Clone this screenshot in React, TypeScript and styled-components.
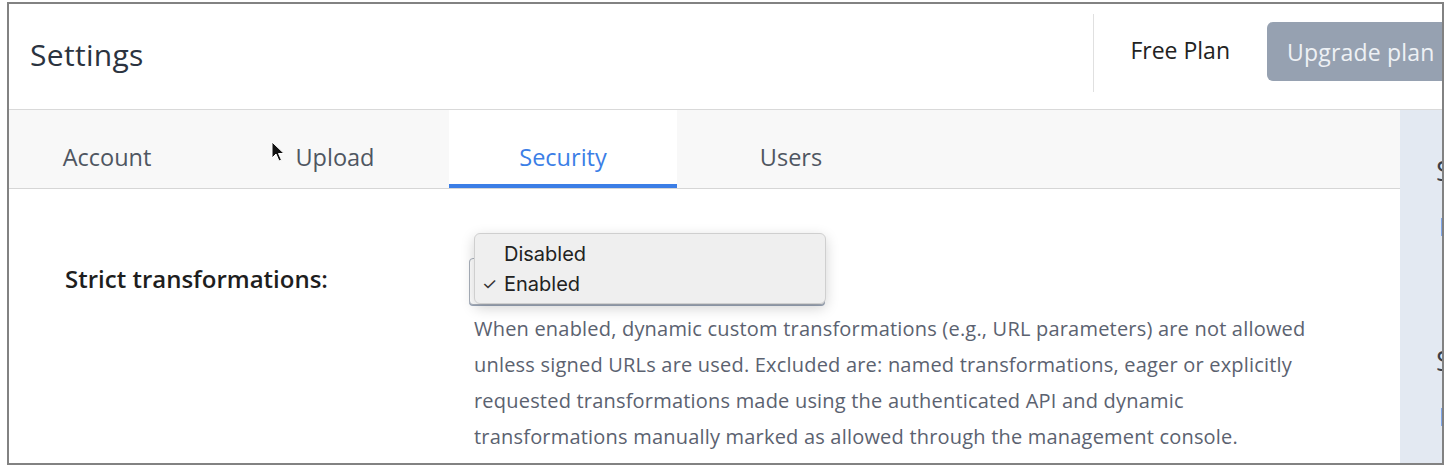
import styled, { createGlobalStyle } from "styled-components";

const tabs = ["Account", "Upload", "Security", "Users"];
const activeTab = "Security";

const options = [
  { id: "disabled", label: "Disabled", checked: false },
  { id: "enabled", label: "Enabled", checked: true },
];

const sideSections = ["Security", "Storage"];

export default function App() {
  return (
    <>
      <GlobalStyle />
      <Frame>
        <Header>
          <Title>Settings</Title>
          <HeaderRight>
            <Divider />
            <PlanName>Free Plan</PlanName>
            <UpgradeButton>Upgrade plan</UpgradeButton>
          </HeaderRight>
        </Header>
        <Body>
          <Main>
            <TabBar>
              {tabs.map((t) => (
                <Tab key={t} $active={t === activeTab}>
                  {t}
                </Tab>
              ))}
              <Cursor width="14" height="22" viewBox="0 0 14 22">
                <path
                  d="M1 1 L1 17 L5 13 L8 20 L10.5 19 L7.5 12.5 L13 12.5 Z"
                  fill="#111"
                  stroke="#fff"
                  strokeWidth="1"
                  strokeLinejoin="round"
                />
              </Cursor>
            </TabBar>
            <Content>
              <Label>Strict transformations:</Label>
              <Control>
                <SelectBox />
                <Popup>
                  {options.map((o) => (
                    <Option key={o.id}>
                      <Check>{o.checked ? "✓" : ""}</Check>
                      {o.label}
                    </Option>
                  ))}
                </Popup>
                <Description>
                  When enabled, dynamic custom transformations (e.g., URL
                  parameters) are not allowed unless signed URLs are used.
                  Excluded are: named transformations, eager or explicitly
                  requested transformations made using the authenticated API
                  and dynamic transformations manually marked as allowed
                  through the management console.
                </Description>
              </Control>
            </Content>
          </Main>
          <Sidebar>
            {sideSections.map((s) => (
              <SideSection key={s}>
                <SideTitle>{s}</SideTitle>
                <SideInput />
              </SideSection>
            ))}
          </Sidebar>
        </Body>
      </Frame>
    </>
  );
}

// styling
const GlobalStyle = createGlobalStyle`
  html, body {
    margin: 0;
    background: #fff;
  }
  body {
    font-family: "Open Sans", "Noto Sans", sans-serif;
  }
`;

const Frame = styled.div`
  box-sizing: border-box;
  margin: 2px 0 0 7px;
  width: 1437px;
  height: 463px;
  border: 2px solid #828282;
  overflow: hidden;
  display: flex;
  flex-direction: column;
  background: #fff;
`;

const Header = styled.div`
  display: flex;
  align-items: center;
  justify-content: space-between;
  height: 106px;
  flex-shrink: 0;
  border-bottom: 1px solid #d9d9d9;
  padding-left: 21px;
  box-sizing: border-box;
`;

const Title = styled.h1`
  margin: 0 0 4px;
  font-size: 30px;
  font-weight: 400;
  color: #2b3340;
  letter-spacing: 0.3px;
`;

const HeaderRight = styled.div`
  display: flex;
  align-items: center;
  height: 100%;
  margin-right: -30px;
`;

const Divider = styled.div`
  width: 1px;
  height: 78px;
  margin-top: -8px;
  background: #e0e0e0;
`;

const PlanName = styled.span`
  margin: -14px 37px 0 36px;
  font-size: 23px;
  color: #222;
`;

const UpgradeButton = styled.button`
  margin-top: -10px;
  height: 59px;
  width: 205px;
  padding: 0 0 0 20px;
  text-align: left;
  border: none;
  border-radius: 6px;
  background: #96a1b1;
  color: #eef1f5;
  font-family: inherit;
  font-size: 23px;
  letter-spacing: 0.2px;
  white-space: nowrap;
`;

const Body = styled.div`
  display: flex;
  flex: 1;
  min-height: 0;
`;

const Main = styled.div`
  flex: 1;
  display: flex;
  flex-direction: column;
`;

const TabBar = styled.div`
  position: relative;
  display: flex;
  height: 78px;
  flex-shrink: 0;
  background: #f8f8f8;
  border-bottom: 1px solid #d6d6d6;
  overflow: hidden;
  & > div:first-child {
    margin-left: -16px;
  }
`;

const Tab = styled.div<{ $active?: boolean }>`
  width: 228px;
  display: flex;
  align-items: center;
  justify-content: center;
  box-sizing: border-box;
  padding-top: 19px;
  font-size: 23.5px;
  color: ${(p) => (p.$active ? "#3b7ee6" : "#4f5661")};
  background: ${(p) => (p.$active ? "#fff" : "transparent")};
  border-bottom: 4px solid ${(p) => (p.$active ? "#3b7ee6" : "transparent")};
`;

const Cursor = styled.svg`
  position: absolute;
  left: 262px;
  top: 31px;
`;

const Content = styled.div`
  flex: 1;
  display: flex;
  align-items: flex-start;
  padding: 69px 0 0 56px;
`;

const Label = styled.div`
  width: 404px;
  flex-shrink: 0;
  padding-top: 4px;
  font-size: 24px;
  font-weight: 600;
  color: #1e1e1e;
`;

const Control = styled.div`
  position: relative;
  width: 880px;
`;

const SelectBox = styled.div`
  width: 356px;
  height: 47px;
  box-sizing: border-box;
  border: 1px solid #a9b0bb;
  border-radius: 4px;
  background: #fff;
  box-shadow: 0 1px 0 #9aa6b8;
`;

const Popup = styled.div`
  position: absolute;
  left: 5px;
  top: -25px;
  width: 352px;
  height: 71px;
  box-sizing: border-box;
  padding: 5px 0 0 7px;
  background: #efefef;
  border: 1px solid #cfcfcf;
  border-radius: 6px;
  box-shadow: 0 4px 14px rgba(0, 0, 0, 0.18);
`;

const Option = styled.div`
  display: flex;
  align-items: center;
  height: 30px;
  font-family: Inter, "Liberation Sans", sans-serif;
  font-size: 20px;
  color: #222;
`;

const Check = styled.span`
  width: 22px;
  font-size: 17px;
  color: #333;
`;

const Description = styled.p`
  margin: 6px 0 0 5px;
  font-size: 20px;
  letter-spacing: 0.2px;
  line-height: 36px;
  color: #5b6270;
  max-width: 845px;
`;

const Sidebar = styled.div`
  width: 42px;
  flex-shrink: 0;
  overflow: hidden;
  background: #e3e9f2;
`;

const SideSection = styled.div`
  width: 300px;
  height: 190px;
  padding: 45px 0 0 36px;
  box-sizing: border-box;
`;

const SideTitle = styled.div`
  font-size: 28px;
  color: #3c4048;
  line-height: 30px;
`;

const SideInput = styled.div`
  margin: 33px 0 0 5px;
  width: 200px;
  height: 18px;
  border-left: 2px solid #7ea6ea;
`;
